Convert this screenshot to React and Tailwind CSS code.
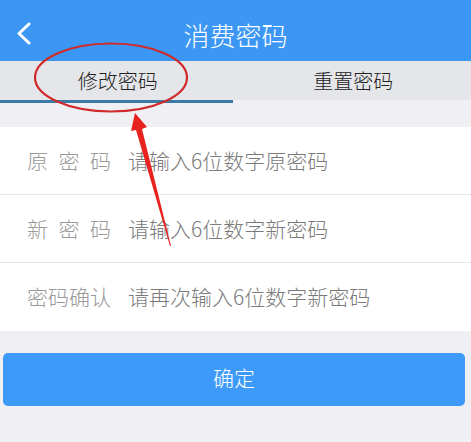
import React from "react";

const rows = [
  { label: ["原", "密", "码"], placeholder: "请输入6位数字原密码" },
  { label: ["新", "密", "码"], placeholder: "请输入6位数字新密码" },
  { label: ["密", "码", "确", "认"], placeholder: "请再次输入6位数字新密码" },
];

export default function App() {
  return (
    <div className="relative w-[471px] h-[442px] overflow-hidden bg-[#efeff4] font-['Noto_Sans_CJK_SC',sans-serif] font-light">
      {/* header */}
      <div className="grid h-[61px] grid-cols-[60px_1fr_60px] items-center bg-[#3c97f4] pt-[6px]">
        <div className="flex pl-[16px]">
          <svg width="16" height="24" viewBox="0 0 16 24" fill="none">
            <path d="M13 2 L3 11.5 L13 21" stroke="white" strokeWidth="3" strokeLinecap="round" strokeLinejoin="round" />
          </svg>
        </div>
        <div className="pt-[2px] text-center text-[26px] leading-none text-white">消费密码</div>
        <div />
      </div>

      {/* tabs */}
      <div className="flex h-[39px] bg-[#e5e6ea]">
        <button className="flex flex-1 items-center justify-center text-[20px] text-[#222]">修改密码</button>
        <button className="flex flex-1 items-center justify-center text-[20px] text-[#222]">重置密码</button>
      </div>
      <div className="h-[3px] w-[233px] bg-[#3b7aa6]" />

      {/* form */}
      <div className="mt-[24px] bg-white">
        {rows.map((row, i) => (
          <div
            key={i}
            className={`flex h-[68px] items-center pl-[27px] ${i < 2 ? "border-b border-[#e6e6e6]" : ""}`}
          >
            <div className="flex w-[84px] justify-between text-[21px] text-[#999]">
              {row.label.map((c, j) => (
                <span key={j}>{c}</span>
              ))}
            </div>
            <input
              className="ml-[17px] flex-1 bg-transparent text-[21px] font-light text-[#555] outline-none placeholder:text-[#7a7a7a]"
              placeholder={row.placeholder}
              type="password"
            />
          </div>
        ))}
      </div>

      <button className="ml-[3px] mt-[22px] flex h-[53px] w-[462px] items-center justify-center rounded-[5px] bg-[#3d9af9] pb-[3px] text-[21px] text-white">
        确定
      </button>

      {/* red annotation */}
      <svg className="pointer-events-none absolute inset-0" width="471" height="442" viewBox="0 0 471 442">
        <ellipse cx="111" cy="77.5" rx="76" ry="34" fill="none" stroke="#d02a2a" strokeWidth="2.2" />
        <polygon
          points="135,113 147,127 142,129 171,246 170,246 136,130 131,131"
          fill="#e8231f"
        />
      </svg>
    </div>
  );
}
